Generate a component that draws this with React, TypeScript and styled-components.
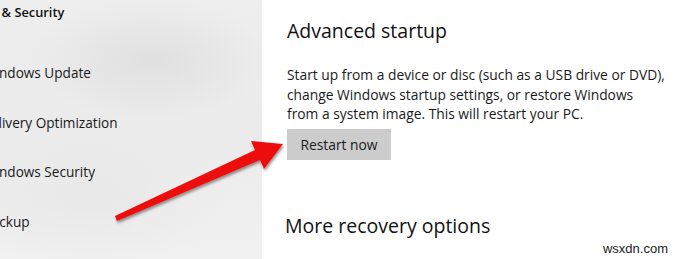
import React from 'react';
import styled, { createGlobalStyle } from 'styled-components';

const GlobalStyle = createGlobalStyle`
  html, body {
    margin: 0;
    padding: 0;
    background: #ffffff;
  }
  body {
    font-family: "Open Sans", "Noto Sans", "Liberation Sans", sans-serif;
    color: #1a1a1a;
  }
`;

const navItems = [
  'Windows Update',
  'Delivery Optimization',
  'Windows Security',
  'Backup',
];

const startupLines = [
  'Start up from a device or disc (such as a USB drive or DVD),',
  'change Windows startup settings, or restore Windows',
  'from a system image. This will restart your PC.',
];

const App = () => {
  return (
    <>
      <GlobalStyle />
      <Window>
        <Sidebar>
          <SideTitle>Update &amp; Security</SideTitle>
          <NavList>
            {navItems.map((item, i) => (
              <NavItem key={i} $clip={i === 1 ? 19 : 17}>
                {item}
              </NavItem>
            ))}
          </NavList>
        </Sidebar>
        <Content>
          <Heading>Advanced startup</Heading>
          <Text>
            {startupLines.map((line, i) => (
              <React.Fragment key={i}>
                {line}
                {i < startupLines.length - 1 && <br />}
              </React.Fragment>
            ))}
          </Text>
          <Button>Restart now</Button>
          <Heading $second>More recovery options</Heading>
        </Content>
        <Arrow viewBox="0 0 680 259" aria-hidden>
          <defs>
            <filter id="shadow" x="-20%" y="-20%" width="140%" height="140%">
              <feGaussianBlur in="SourceAlpha" stdDeviation="1.6" />
              <feOffset dx="1" dy="2" result="b" />
              <feComponentTransfer>
                <feFuncA type="linear" slope="0.45" />
              </feComponentTransfer>
              <feMerge>
                <feMergeNode />
                <feMergeNode in="SourceGraphic" />
              </feMerge>
            </filter>
          </defs>
          <path
            d="M115 216 L117 221 L260 160 L264 169 L283 144 L251 141 L255 150 Z"
            fill="#ee1111"
            filter="url(#shadow)"
          />
        </Arrow>
        <Watermark>wsxdn.com</Watermark>
      </Window>
    </>
  );
};

const Window = styled.div`
  position: relative;
  width: 680px;
  height: 259px;
  display: grid;
  grid-template-columns: 262px 1fr;
  overflow: hidden;
`;

const Sidebar = styled.div`
  display: flex;
  flex-direction: column;
  overflow: hidden;
  background:
    radial-gradient(ellipse 120px 60px at 150px 60px, rgba(205, 205, 205, 0.4), transparent),
    radial-gradient(ellipse 140px 70px at 90px 200px, rgba(220, 220, 220, 0.35), transparent),
    linear-gradient(180deg, #eeeeee 0%, #ebebeb 50%, #f1f1f1 100%);
`;

const SideTitle = styled.div`
  margin: 1px 0 0 -47px;
  font-size: 12.8px;
  font-weight: 600;
  line-height: 22px;
  white-space: nowrap;
  color: #111;
`;

const NavList = styled.div`
  display: flex;
  flex-direction: column;
  gap: 27.5px;
  margin-top: 39px;
`;

const NavItem = styled.div<{ $clip: number }>`
  margin-left: ${(p) => -p.$clip}px;
  font-size: 13.6px;
  line-height: 22px;
  white-space: nowrap;
  color: #1a1a1a;
`;

const Content = styled.div`
  background: #ffffff;
  padding: 17px 0 0 25px;
  display: flex;
  flex-direction: column;
  align-items: flex-start;
`;

const Heading = styled.h2<{ $second?: boolean }>`
  margin: ${(p) => (p.$second ? '52px 0 0 -2px' : '0')};
  font-size: 19.5px;
  font-weight: 400;
  line-height: 28px;
  color: #111;
`;

const Text = styled.p`
  margin: 20px 0 0;
  font-size: 13.8px;
  line-height: 19.5px;
  white-space: nowrap;
  color: #1a1a1a;
`;

const Button = styled.div`
  margin-top: 5px;
  width: 104px;
  height: 31px;
  display: flex;
  align-items: center;
  justify-content: center;
  background: #cccccc;
  font-size: 13.8px;
  color: #1a1a1a;
`;

const Arrow = styled.svg`
  position: absolute;
  left: 0;
  top: 0;
  width: 680px;
  height: 259px;
  pointer-events: none;
`;

const Watermark = styled.div`
  position: absolute;
  right: 12px;
  bottom: 3px;
  font-family: "Liberation Sans", Arial, sans-serif;
  font-size: 13px;
  color: #222;
`;

export default App;
